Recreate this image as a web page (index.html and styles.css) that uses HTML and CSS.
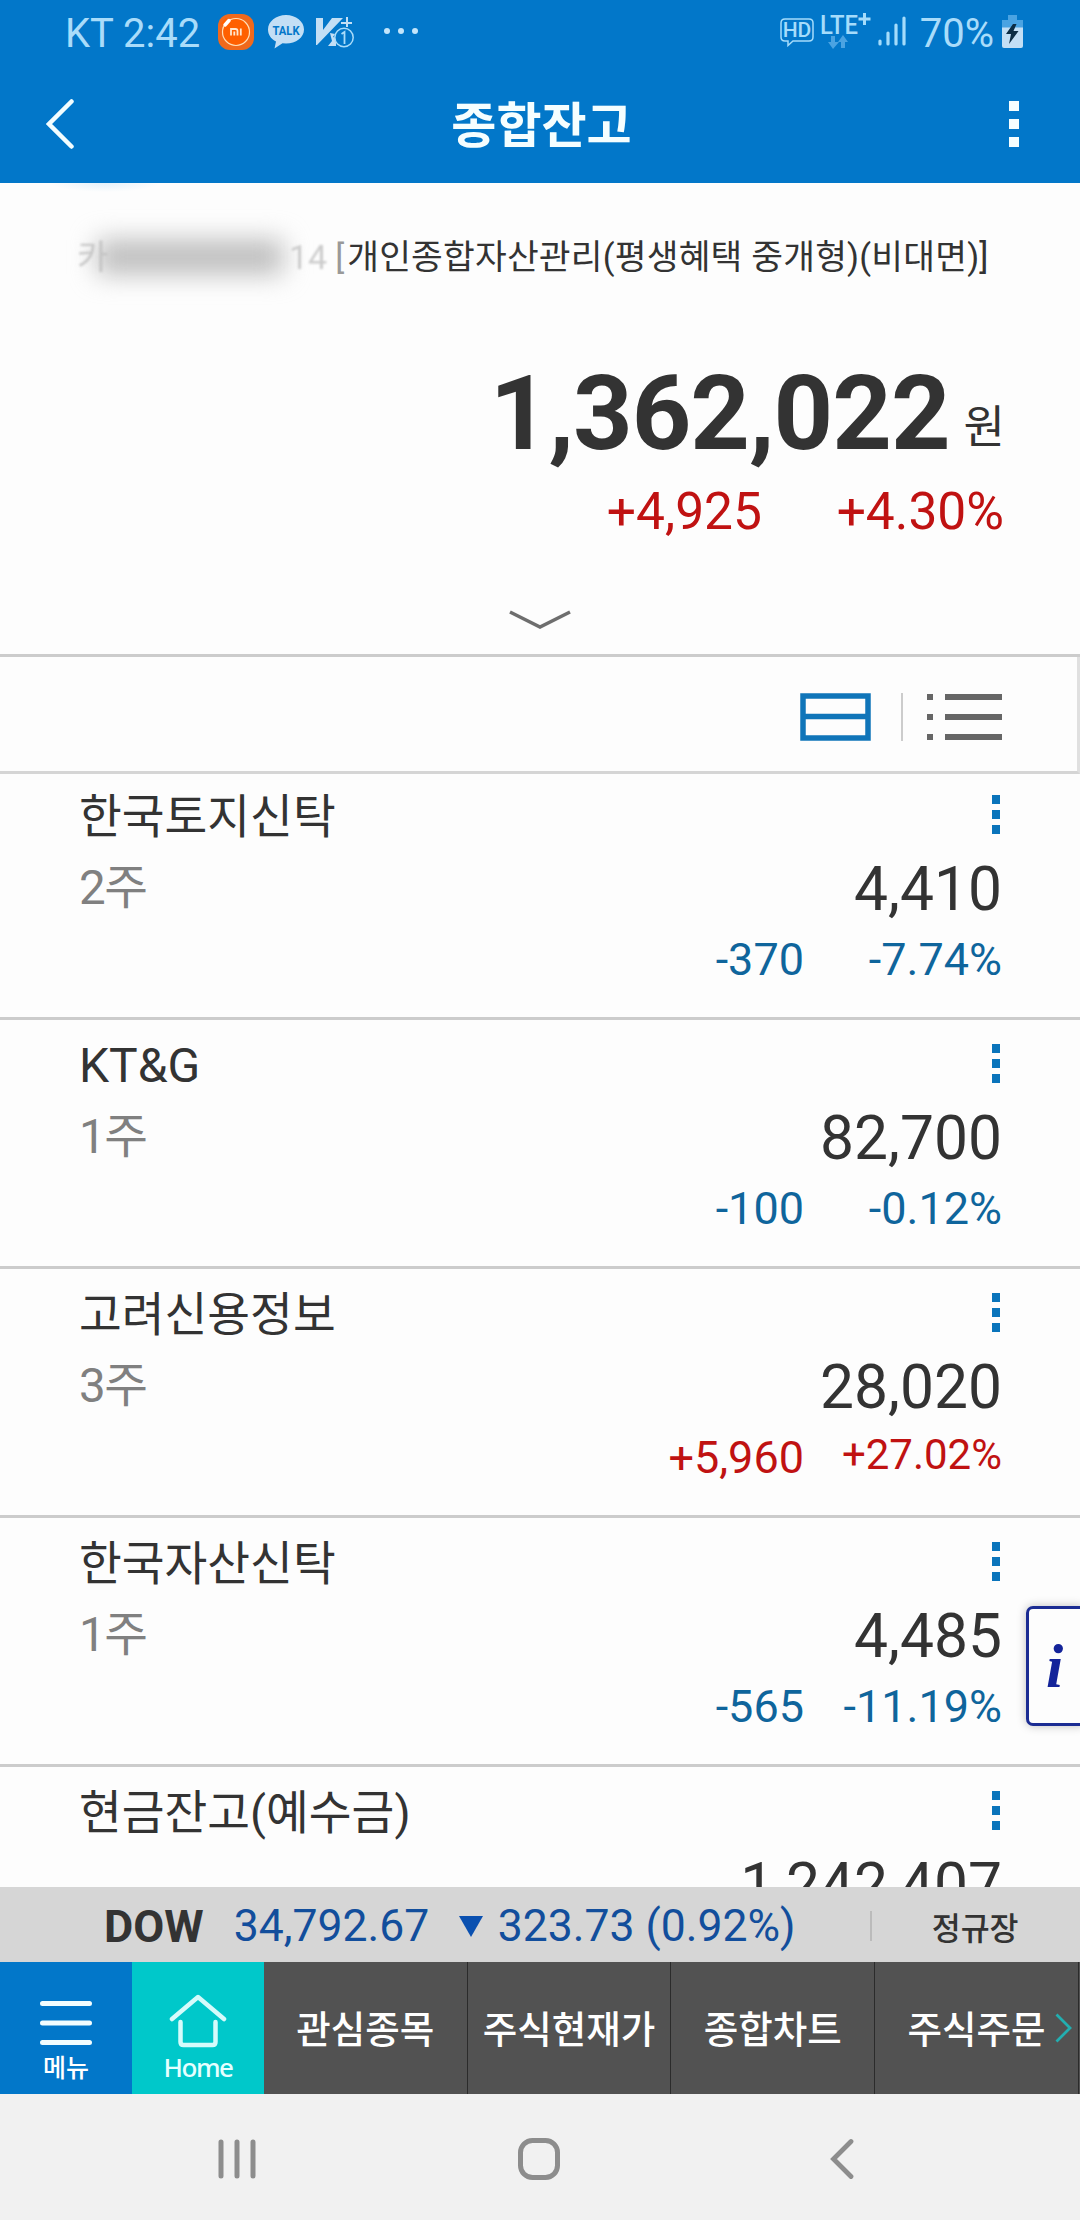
FILE: index.html
```html
<!DOCTYPE html>
<html lang="ko">
  <head>
    <meta charset="UTF-8" />
    <title>종합잔고</title>
    <meta name="viewport" content="width=device-width, initial-scale=1.0" />
    <link rel="stylesheet" href="styles.css">
  </head>
  <body>
    <div class="app">
      <header class="top">
        <div class="status-bar">
          <span class="status-text carrier">KT 2:42</span>
          <svg class="icon-mi" width="36" height="36" viewBox="0 0 36 36">
            <rect width="36" height="36" rx="12" fill="#f0691c" />
            <circle cx="18" cy="18" r="13.500" fill="#ff6000" stroke="#ffe0b8" stroke-width="1.200" />
            <path d="M5.500 12l5-6" stroke="#ff6000" stroke-width="7" />
            <path d="M7 11l4-4.500" stroke="#fff" stroke-width="3.500" stroke-linecap="round" />
            <path d="M13 21.500v-6.500h4.500q2 0 2 2v4.500M16.300 17.500v4M22.800 14.500v7" fill="none" stroke="#ffe8d0" stroke-width="1.800" />
          </svg>
          <svg class="icon-talk" width="36" height="34" viewBox="0 0 36 34">
            <path d="M18 0C8 0 0 6.500 0 14.500c0 5 3 9.500 8 12L6.500 33.500l8-5.300 3.500.300c10 0 18-6 18-14S28 0 18 0z" fill="#c3dff5" />
            <text x="18" y="19.500" text-anchor="middle" class="talk-text" textLength="27" lengthAdjust="spacingAndGlyphs">TALK</text>
          </svg>
          <svg class="icon-v" width="38" height="32" viewBox="0 0 38 32">
            <path d="M0 1h7v12L16 1h11L1 28H0z" fill="#c3dff5" />
            <path d="M14 16l5 1-2 3 3 1v8h-8l4-5z" fill="#c3dff5" />
            <path d="M31 0v10M25 6h11" stroke="#c3dff5" stroke-width="2" />
            <circle cx="28" cy="20.500" r="9.200" fill="#0277c9" stroke="#a9dcfa" stroke-width="1.500" />
            <path d="M25.500 17l3-2v12" fill="none" stroke="#a9dcfa" stroke-width="1.800" />
          </svg>
          <svg class="icon-more" width="36" height="8" viewBox="0 0 36 8">
            <g fill="#c3e5fb"><circle cx="4" cy="4" r="3" /><circle cx="18" cy="4" r="3" /><circle cx="32" cy="4" r="3" /></g>
          </svg>
          <svg class="icon-hd" width="34" height="29" viewBox="0 0 34 29">
            <path d="M5 1h24q4 0 4 4v14q0 4-4 4H13l-5 4.500V23H5q-4 0-4-4V5q0-4 4-4z" fill="none" stroke="#a5dcfb" stroke-width="1.500" />
            <text x="17" y="19" text-anchor="middle" class="hd-text">HD</text>
          </svg>
          <svg class="icon-lte" width="52" height="38" viewBox="0 0 52 38">
            <text x="0" y="21.500" class="lte-text" textLength="38" lengthAdjust="spacingAndGlyphs">LTE</text>
            <path d="M44.500 1v12M38.500 7h12" stroke="#a5dcfb" stroke-width="3" />
            <g fill="#4aa3e2">
              <path d="M11 24h4v6h4l-6 7-5-7h3z" />
              <path d="M21 36h4v-6h3l-5-7-5 7h3z" />
            </g>
          </svg>
          <svg class="icon-signal" width="28" height="31" viewBox="0 0 28 31">
            <g stroke="#a5dcfb" stroke-width="3.200" stroke-linecap="round">
              <path d="M2 25v3M10 17v11M18 9v19M26 2v26" />
            </g>
          </svg>
          <span class="status-text percent">70%</span>
          <svg class="icon-battery" width="22" height="34" viewBox="0 0 22 34">
            <path d="M6 0h9v5h6v8H0V5h6z" fill="#4aa3e2" />
            <path d="M0 12.500h21V31q0 2-2 2H2q-2 0-2-2z" fill="#c3dff5" />
            <path d="M11 9L4 19h5l-2 10 9.500-13h-5l3-7z" fill="#0c2d45" />
          </svg>
        </div>
        <div class="title-bar">
          <svg class="back" width="28" height="50" viewBox="0 0 28 50">
            <path d="M25.500 2.500L3 25l22.500 22.500" fill="none" stroke="#f2fdff" stroke-width="4.500" stroke-linecap="round" />
          </svg>
          <h1>종합잔고</h1>
          <div class="kebab kebab-white"><i></i><i></i><i></i></div>
        </div>
      </header>

      <section class="summary">
        <div class="account">
          <span class="masked-char">카</span>
          <span class="mask"></span>
          <span class="masked-no">14</span>
          <span class="bracket">[</span>
          <span class="account-name">개인종합자산관리(평생혜택 중개형)(비대면)]</span>
        </div>
        <div class="total">
          <strong>1,362,022</strong>
          <span>원</span>
        </div>
        <div class="total-change up">
          <span>+4,925</span>
          <span class="total-rate">+4.30%</span>
        </div>
        <svg class="expand" width="62" height="20" viewBox="0 0 62 20">
          <path d="M1 2l30 15L61 2" fill="none" stroke="#6e6e6e" stroke-width="3.500" />
        </svg>
      </section>

      <div class="view-bar">
        <svg width="71" height="48" viewBox="0 0 71 48">
          <path d="M3 3h65v42H3zM3 23.500h65" fill="none" stroke="#1075b9" stroke-width="5.500" />
        </svg>
        <span class="divider"></span>
        <svg width="75" height="48" viewBox="0 0 75 48">
          <path d="M0 4h6M18 4h57M0 24h6M18 24h57M0 44h6M18 44h57" stroke="#666" stroke-width="6" />
        </svg>
      </div>

      <main class="holdings">
        <article class="holding">
          <div class="row name-row"><h2>한국토지신탁</h2><div class="kebab"><i></i><i></i><i></i></div></div>
          <div class="row qty-row"><span class="qty">2주</span><span class="price">4,410</span></div>
          <div class="row change-row down"><span>-370</span><span class="rate">-7.74%</span></div>
        </article>
        <article class="holding">
          <div class="row name-row"><h2 class="latin">KT&amp;G</h2><div class="kebab"><i></i><i></i><i></i></div></div>
          <div class="row qty-row"><span class="qty">1주</span><span class="price">82,700</span></div>
          <div class="row change-row down"><span>-100</span><span class="rate">-0.12%</span></div>
        </article>
        <article class="holding">
          <div class="row name-row"><h2>고려신용정보</h2><div class="kebab"><i></i><i></i><i></i></div></div>
          <div class="row qty-row"><span class="qty">3주</span><span class="price">28,020</span></div>
          <div class="row change-row up"><span>+5,960</span><span class="rate rate-small">+27.02%</span></div>
        </article>
        <article class="holding">
          <div class="row name-row"><h2>한국자산신탁</h2><div class="kebab"><i></i><i></i><i></i></div></div>
          <div class="row qty-row"><span class="qty">1주</span><span class="price">4,485</span></div>
          <div class="row change-row down"><span>-565</span><span class="rate">-11.19%</span></div>
        </article>
        <article class="holding">
          <div class="row name-row"><h2>현금잔고(예수금)</h2><div class="kebab"><i></i><i></i><i></i></div></div>
          <div class="row qty-row"><span class="qty"></span><span class="price">1,242,407</span></div>
        </article>
      </main>

      <div class="ticker">
        <strong>DOW</strong>
        <span class="index">34,792.67</span>
        <svg width="24" height="21" viewBox="0 0 24 21"><path d="M0 0h24L12 21z" fill="#0a50b0" /></svg>
        <span class="diff">323.73 (0.92%)</span>
        <span class="ticker-divider"></span>
        <span class="session">정규장</span>
      </div>

      <nav class="tabs">
        <a class="tab-icon tab-menu">
          <svg width="52" height="46" viewBox="0 0 52 46">
            <path d="M2.500 3.500h47M2.500 23h47M2.500 42.500h47" stroke="#f2fdff" stroke-width="5" stroke-linecap="round" />
          </svg>
          <span>메뉴</span>
        </a>
        <a class="tab-icon tab-home">
          <svg width="58" height="54" viewBox="0 0 58 54">
            <path d="M3 25L29 3l26 22M11.500 28v20q0 3 3 3h29q3 0 3-3V28" fill="none" stroke="#d5fbfb" stroke-width="4.500" stroke-linecap="round" stroke-linejoin="round" />
          </svg>
          <span class="home-label">Home</span>
        </a>
        <a class="tab">관심종목</a>
        <a class="tab">주식현재가</a>
        <a class="tab">종합차트</a>
        <a class="tab">주식주문</a>
        <svg class="tabs-next" width="17" height="30" viewBox="0 0 17 30">
          <path d="M1.500 1.500L15 15 1.500 28.500" fill="none" stroke="#22aeb0" stroke-width="2.800" />
        </svg>
      </nav>

      <div class="system-nav">
        <svg width="38" height="42" viewBox="0 0 38 42">
          <path d="M3 4v34M19 4v34M35 4v34" stroke="#8d8d8d" stroke-width="5" stroke-linecap="round" />
        </svg>
        <svg class="nav-home" width="42" height="42" viewBox="0 0 42 42">
          <rect x="2.500" y="2.500" width="37" height="37" rx="12" fill="none" stroke="#8d8d8d" stroke-width="5" />
        </svg>
        <svg width="24" height="42" viewBox="0 0 24 42">
          <path d="M21 3.500L3.500 21 21 38.500" fill="none" stroke="#8d8d8d" stroke-width="4.800" stroke-linecap="round" />
        </svg>
      </div>

      <div class="info-tab">i</div>
    </div>
  </body>
</html>
```

FILE: styles.css
```css
* {
  box-sizing: border-box;
}
body {
  margin: 0;
  background: #fdfdfd;
  color: #333;
  font-family: Roboto, "Noto Sans CJK KR", sans-serif;
}
h1,
h2 {
  margin: 0;
  font-weight: normal;
}
svg {
  display: block;
  flex: none;
}
.app {
  position: relative;
  display: flex;
  flex-direction: column;
  width: 1080px;
  height: 2220px;
  overflow: hidden;
}
.up {
  color: #c01212;
}
.down {
  color: #0f659c;
}

/* header */
.top {
  flex: none;
  height: 183px;
  background: #0277c9;
}
.status-bar {
  display: flex;
  align-items: flex-start;
  height: 64px;
  padding: 12px 0 0 65px;
}
.status-text {
  color: #a9dcfa;
  font-size: 40px;
  line-height: 44px;
}
.carrier {
  width: 153px;
}
.icon-mi {
  margin: 2px 14px 0 0;
}
.icon-talk {
  margin: 3px 12px 0 0;
}
.icon-v {
  margin: 5px 29px 0 0;
}
.icon-more {
  margin-top: 15px;
}
.icon-hd {
  margin: 6px 6px 0 auto;
}
.icon-lte {
  margin-right: 6px;
}
.icon-signal {
  margin: 4px 14px 0 0;
}
.icon-battery {
  margin: 3px 56px 0 8px;
}
.talk-text {
  fill: #0277c9;
  font-size: 13px;
  font-weight: bold;
}
.hd-text {
  fill: #a5dcfb;
  font-size: 21px;
  font-weight: 500;
}
.lte-text {
  fill: #a5dcfb;
  font-size: 25px;
  font-weight: 500;
}
.title-bar {
  display: flex;
  align-items: center;
  justify-content: space-between;
  height: 119px;
  padding: 0 61px 0 46px;
}
.title-bar h1 {
  padding-top: 7px;
  color: #f5feff;
  font-size: 49px;
  font-weight: bold;
  line-height: 60px;
}
.kebab {
  display: flex;
  flex-direction: column;
  gap: 6px;
}
.kebab i {
  width: 8px;
  height: 9px;
  background: #0a74bb;
}
.kebab-white {
  gap: 8px;
}
.kebab-white i {
  width: 10px;
  height: 10px;
  background: #f5feff;
}

/* account summary */
.summary {
  flex: none;
  display: flex;
  flex-direction: column;
  align-items: flex-end;
  height: 474px;
  padding-right: 76px;
  border-bottom: 3px solid #ccc;
  background: radial-gradient(ellipse 55px 9px at 105px 0, #e3f1fb, transparent);
}
.account {
  display: flex;
  align-items: center;
  width: 927px;
  height: 48px;
  margin-top: 50px;
  font-size: 34px;
  line-height: 48px;
  white-space: nowrap;
}
.masked-char {
  width: 20px;
  color: #ccc;
  filter: blur(1px);
}
.mask {
  width: 186px;
  height: 34px;
  background: #bcbcbc;
  filter: blur(13px);
}
.masked-no {
  margin-left: 6px;
  color: #ccc;
  filter: blur(1px);
}
.bracket {
  margin-left: 8px;
  color: #999;
}
.account-name {
  margin-left: 3px;
  font-size: 34.5px;
  letter-spacing: 0.2px;
}
.total {
  display: flex;
  align-items: flex-start;
  margin-top: 73px;
  line-height: 120px;
}
.total strong {
  font-size: 104px;
  font-weight: bold;
  letter-spacing: -1px;
}
.total span {
  margin: 14px -1px 0 14px;
  font-size: 45px;
}
.total-change {
  display: flex;
  margin-top: -6px;
  font-size: 51.5px;
  line-height: 60px;
}
.total-rate {
  width: 242px;
  text-align: right;
}
.expand {
  align-self: center;
  margin: 68px -76px 0 0;
}

/* view switch */
.view-bar {
  flex: none;
  display: flex;
  align-items: center;
  justify-content: flex-end;
  height: 117px;
  padding: 6px 75px 0 0;
  border-right: 3px solid #e0e0e0;
  border-bottom: 3px solid #d5d5d5;
}
.divider {
  width: 2px;
  height: 48px;
  margin: 0 24px 0 30px;
  background: #ccc;
}

/* holdings */
.holdings {
  flex: 1;
  min-height: 0;
  overflow: hidden;
}
.holding {
  height: 249px;
  padding: 24px 78px 0 79px;
  border-bottom: 3px solid #ccc;
}
.holding:first-child {
  height: 246px;
  padding-top: 21px;
}
.row {
  display: flex;
  justify-content: space-between;
}
.name-row {
  height: 60px;
}
.name-row .kebab {
  margin-right: 2px;
}
.name-row h2 {
  margin-top: -8px;
  font-size: 46.5px;
  line-height: 60px;
}
.name-row .latin {
  font-size: 48px;
}
.qty-row {
  height: 75px;
}
.qty {
  color: #808080;
  font-size: 47.5px;
  letter-spacing: -1.5px;
  line-height: 67px;
}
.price {
  font-size: 60.5px;
  line-height: 70px;
}
.change-row {
  justify-content: flex-end;
  font-size: 45px;
  line-height: 60px;
}
.rate {
  width: 198px;
  text-align: right;
}
.rate-small {
  margin-top: -3px;
  font-size: 42px;
}

/* market ticker */
.ticker {
  flex: none;
  display: flex;
  align-items: center;
  height: 75px;
  padding: 3px 0 0 104px;
  background: #d6d6d6;
  font-size: 45px;
  white-space: nowrap;
}
.index,
.diff {
  color: #124e9c;
  font-size: 44.5px;
}
.index {
  width: 225px;
  margin-left: 30px;
}
.diff {
  width: 372px;
  margin-left: 15px;
}
.ticker-divider {
  width: 2px;
  height: 30px;
  background: #bbb;
}
.session {
  margin-left: 60px;
  font-size: 31.5px;
  font-weight: 500;
}

/* bottom tabs */
.tabs {
  flex: none;
  display: flex;
  position: relative;
  height: 132px;
  background: #525252;
  color: #fff;
}
.tab-icon {
  display: flex;
  flex-direction: column;
  align-items: center;
  width: 132px;
  font-size: 25px;
  font-weight: 500;
  line-height: 30px;
}
.tab-menu {
  padding-top: 38px;
  background: #0277c9;
}
.tab-menu span {
  margin-top: 8px;
}
.tab-home {
  padding-top: 32px;
  background: #00c8ca;
}
.home-label {
  margin-top: 4px;
  font-family: "Noto Sans", sans-serif;
  font-size: 26px;
  letter-spacing: -1.5px;
  color: #e5ffff;
}
.tab {
  width: 203.7px;
  padding-top: 2px;
  border-right: 1px solid #2b2b2b;
  font-size: 37.5px;
  font-weight: 500;
  line-height: 132px;
  text-align: center;
}
.tabs-next {
  position: absolute;
  top: 51px;
  right: 8px;
}

/* android navigation */
.system-nav {
  flex: none;
  display: flex;
  align-items: center;
  justify-content: space-between;
  height: 126px;
  padding: 4px 226px 0 218px;
  background: #f1f1f1;
}
.nav-home {
  margin-right: 8px;
}

.info-tab {
  position: absolute;
  top: 1606px;
  right: -6px;
  width: 60px;
  height: 120px;
  padding-left: 17px;
  border: 3px solid #1b2c93;
  border-radius: 7px;
  background: #fdfdfd;
  box-shadow: 0 0 10px rgba(0, 0, 0, 0.25);
  color: #14249a;
  font: italic bold 62px/114px "Liberation Serif", serif;
}
```
